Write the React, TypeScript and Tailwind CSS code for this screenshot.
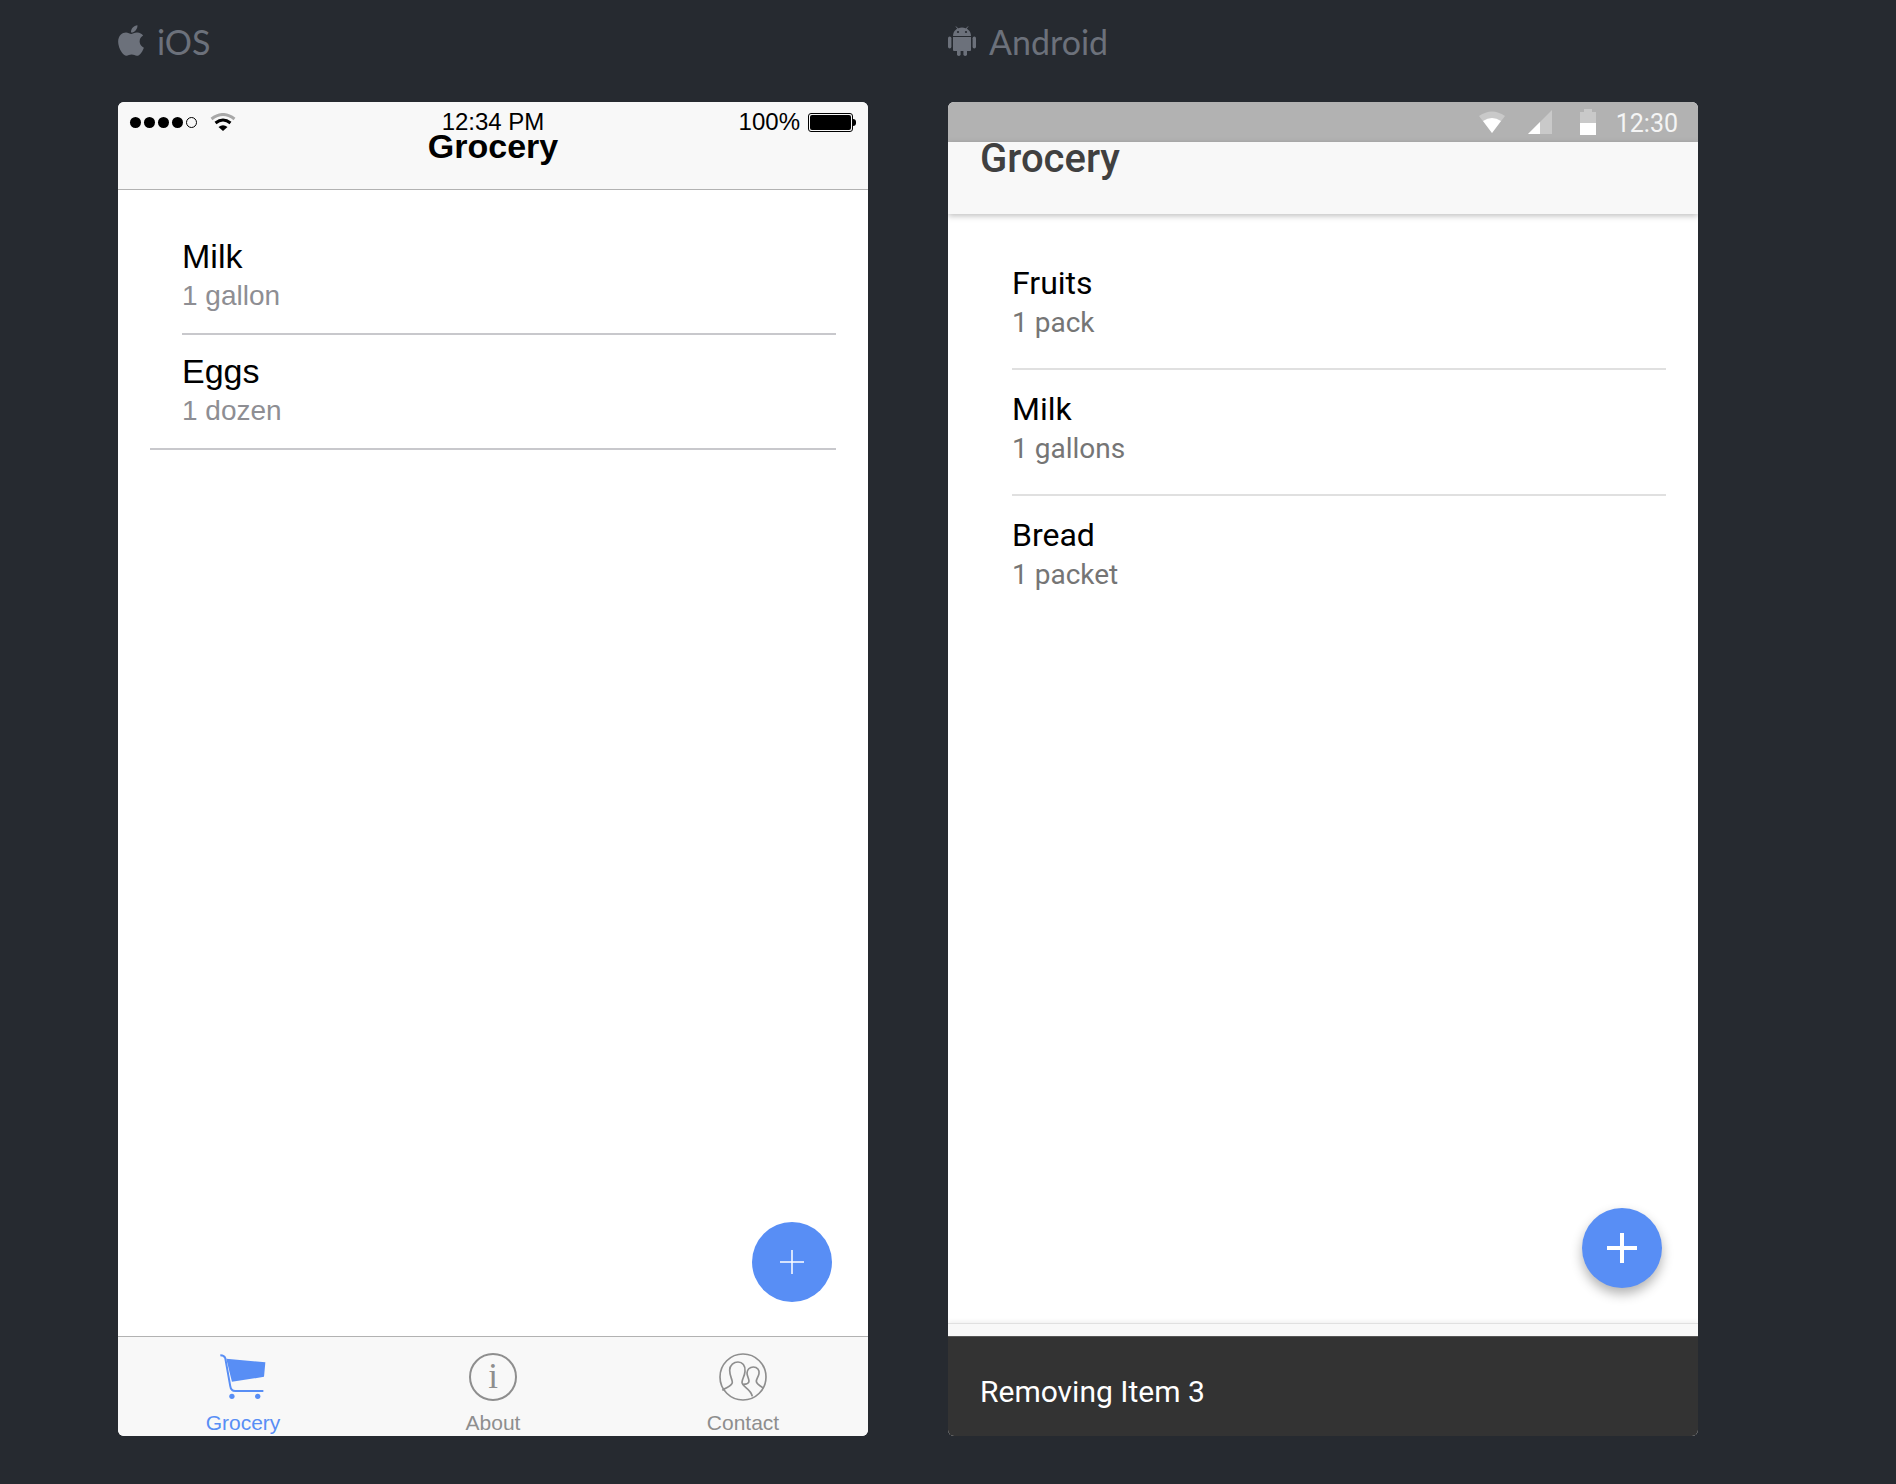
import React from 'react';
import { FaApple } from 'react-icons/fa';

const iosFont = "font-['Liberation_Sans',Arial,sans-serif]";
const roboto = "font-['Roboto',sans-serif]";

function PlatformLabel({ icon, label, gap }: { icon: React.ReactNode; label: string; gap: string }) {
  return (
    <div className={`flex h-[83px] items-center ${gap} mb-[19px] text-[#6c717b] font-['Lato',sans-serif] text-[34px]`}>
      {icon}
      <span>{label}</span>
    </div>
  );
}

function AndroidLogo() {
  return (
    <svg width="28" height="30" viewBox="0 0 28 30" fill="#6c717b" className="-mt-[2px]">
      <path d="M5 10 C5 5 9 1.500 14 1.500 C19 1.500 23 5 23 10 Z" />
      <path d="M8 0.500 L10.500 3.500 M20 0.500 L17.500 3.500" stroke="#6c717b" strokeWidth="1" />
      <circle cx="10" cy="6" r="1.100" fill="#262a30" />
      <circle cx="18" cy="6" r="1.100" fill="#262a30" />
      <path d="M5 11 H23 V24 Q23 25 22 25 H6 Q5 25 5 24 Z" />
      <rect x="0" y="10.500" width="3.400" height="12" rx="1.700" />
      <rect x="24.600" y="10.500" width="3.400" height="12" rx="1.700" />
      <rect x="9" y="23" width="3.600" height="7" rx="1.800" />
      <rect x="15.400" y="23" width="3.600" height="7" rx="1.800" />
    </svg>
  );
}

function IosWifi() {
  return (
    <svg width="26" height="18" viewBox="0 0 26 18" className="ml-[13px]">
      <path d="M1.500 6 Q13 -3 24.500 6" fill="none" stroke="#a8a8a8" strokeWidth="3" />
      <path d="M5.500 10 Q13 4 20.500 10" fill="none" stroke="#000" strokeWidth="3" />
      <path d="M8.500 14 Q13 10.500 17.500 14 L13 18 Z" fill="#000" />
    </svg>
  );
}

function IosStatusBar() {
  return (
    <div className="grid h-10 grid-cols-3 items-center text-[24px] text-black">
      <div className="flex items-center pl-3">
        <div className="flex gap-[3px]">
          {[0, 1, 2, 3].map((i) => (
            <span key={i} className="h-[11px] w-[11px] rounded-full bg-black" />
          ))}
          <span className="h-[11px] w-[11px] rounded-full border border-black" />
        </div>
        <IosWifi />
      </div>
      <div className="text-center leading-none">12:34 PM</div>
      <div className="flex items-center justify-end gap-2 pr-3 leading-none">
        <span>100%</span>
        <div className="flex items-center">
          <div className="h-[19px] w-[45px] rounded-[3px] border border-black p-px">
            <div className="h-full w-full rounded-[2px] bg-black" />
          </div>
          <div className="h-[7px] w-[3px] rounded-r-sm bg-black" />
        </div>
      </div>
    </div>
  );
}

function IosRow({ title, sub, className }: { title: string; sub: string; className: string }) {
  return (
    <div className={`border-b-2 border-[#c8c8cc] ${className}`}>
      <div className="text-[34px] leading-10 text-black">{title}</div>
      <div className="text-[28px] leading-10 text-[#8e8e93]">{sub}</div>
    </div>
  );
}

function CartIcon() {
  return (
    <svg width="53" height="48" viewBox="50 40 160 145">
      <polygon points="78,57 196,68 192,112 95,127" fill="#588ef5" />
      <path d="M60 47 Q72 47 75 56 L90 140 Q92 155 105 155 L190 155" fill="none" stroke="#588ef5" strokeWidth="6" />
      <circle cx="95" cy="171" r="8" fill="#588ef5" />
      <circle cx="173" cy="171" r="8" fill="#588ef5" />
    </svg>
  );
}

function ContactIcon() {
  return (
    <svg width="48" height="48" viewBox="88 40 144 144" fill="none" stroke="#8e8e8e" strokeWidth="5">
      <circle cx="160" cy="112" r="69" />
      <path d="M98 152 C110 142 128 140 128 128 C128 118 120 110 120 92 C120 76 133 67 145 67 C158 67 168 78 166 95 C165 110 157 118 157 128 C157 142 183 146 188 170" />
      <path d="M160 134 C172 134 178 130 178 124 C178 116 172 110 172 100 C172 90 180 82 191 82 C203 82 210 92 208 102 C206 112 200 118 200 125 C200 135 212 137 221 146" />
    </svg>
  );
}

function IosTab({ icon, label, active }: { icon: React.ReactNode; label: string; active?: boolean }) {
  return (
    <div className={`flex flex-col items-center pt-4 ${active ? 'text-[#588ef5]' : 'text-[#8e8e8e]'}`}>
      <div className="flex h-12 items-center justify-center">{icon}</div>
      <div className="mt-[10px] text-[21px] leading-6">{label}</div>
    </div>
  );
}

function IosPhone() {
  return (
    <div className={`relative flex h-[1334px] w-[750px] flex-col overflow-hidden rounded-md bg-white ${iosFont}`}>
      <div className="h-[88px] border-b border-[#b2b2b2] bg-[#f8f8f8]">
        <IosStatusBar />
        <div className="-mt-[8px] text-center text-[34px] font-bold leading-6 text-black">Grocery</div>
      </div>
      <div className="flex-1 pt-[32px]">
        <IosRow title="Milk" sub="1 gallon" className="ml-16 mr-8 h-[113px] pt-[14px]" />
        <IosRow title="Eggs" sub="1 dozen" className="ml-8 mr-8 h-[115px] pl-8 pt-[16px]" />
      </div>
      <div className="grid h-[100px] grid-cols-3 border-t border-[#b2b2b2] bg-[#f8f8f8]">
        <IosTab icon={<CartIcon />} label="Grocery" active />
        <IosTab
          icon={
            <div className="flex h-12 w-12 items-center justify-center rounded-full border-2 border-[#8e8e8e] font-['Liberation_Serif',serif] text-[35px]">
              i
            </div>
          }
          label="About"
        />
        <IosTab icon={<ContactIcon />} label="Contact" />
      </div>
      <button className="absolute right-[36px] top-[1120px] flex h-20 w-20 items-center justify-center rounded-full bg-[#588ef5]">
        <svg width="24" height="24" viewBox="0 0 24 24" stroke="#fff" strokeWidth="1.5">
          <path d="M12 0V24M0 12H24" />
        </svg>
      </button>
    </div>
  );
}

function AndroidStatusBar() {
  return (
    <div className="flex h-10 items-center justify-end bg-[#b2b2b2] pr-5 text-[25px] text-[#f5f5f5]">
      <svg width="26" height="22" viewBox="0 0 26 22">
        <path d="M0 5 Q13 -4 26 5 L13 22 Z" fill="#fff" fillOpacity="0.3" />
        <path d="M4 10 Q13 4 22 10 L13 22 Z" fill="#fff" />
      </svg>
      <svg width="24" height="24" viewBox="0 0 24 24" className="ml-[23px]">
        <polygon points="24,0 24,24 0,24" fill="#fff" fillOpacity="0.3" />
        <polygon points="12,12 12,24 0,24" fill="#fff" />
      </svg>
      <svg width="16" height="26" viewBox="0 0 16 26" className="ml-[28px]">
        <path d="M0 3H4V0H12V3H16V14H0Z" fill="#fff" fillOpacity="0.3" />
        <rect x="0" y="14" width="16" height="12" fill="#fff" />
      </svg>
      <span className="ml-5 pt-[2px] leading-none">12:30</span>
    </div>
  );
}

function AndroidRow({ title, sub, last }: { title: string; sub: string; last?: boolean }) {
  return (
    <div className={`h-[126px] pt-[19px] ${last ? '' : 'border-b-2 border-[#e0e0e0]'}`}>
      <div className="text-[32px] leading-10 text-black">{title}</div>
      <div className="text-[28px] leading-10 text-[#757575]">{sub}</div>
    </div>
  );
}

function AndroidPhone() {
  return (
    <div className={`relative flex h-[1334px] w-[750px] flex-col overflow-hidden rounded-md bg-white ${roboto}`}>
      <AndroidStatusBar />
      <div className="z-10 h-[72px] bg-[#f8f8f8] pl-8 shadow-[0_2px_6px_rgba(0,0,0,0.25)]">
        <div className="text-[40px] font-medium leading-[34px] text-[#404040]">Grocery</div>
      </div>
      <div className="flex-1 pl-16 pr-8 pt-[30px]">
        <AndroidRow title="Fruits" sub="1 pack" />
        <AndroidRow title="Milk" sub="1 gallons" />
        <AndroidRow title="Bread" sub="1 packet" last />
      </div>
      <div className="h-[13px] border-t border-[#e0e0e0] bg-[#f8f8f8] shadow-[0_-2px_4px_rgba(0,0,0,0.06)]" />
      <div className="flex h-[100px] items-center border-t border-[#555] bg-[#333333] pl-8 pt-[10px] text-[30px] text-white">
        Removing Item 3
      </div>
      <button className="absolute right-[36px] top-[1106px] flex h-20 w-20 items-center justify-center rounded-full bg-[#588ef5] shadow-[0_6px_12px_rgba(0,0,0,0.3)]">
        <svg width="30" height="30" viewBox="0 0 30 30" stroke="#fff" strokeWidth="4">
          <path d="M15 0V30M0 15H30" />
        </svg>
      </button>
    </div>
  );
}

export default function App() {
  return (
    <div className="flex h-[1484px] gap-20 overflow-hidden bg-[#262a30] pl-[118px]">
      <div>
        <PlatformLabel icon={<FaApple className="-ml-[2px] -mt-[3px] h-[35px] w-[30px]" />} label="iOS" gap="gap-[11px]" />
        <IosPhone />
      </div>
      <div>
        <PlatformLabel icon={<AndroidLogo />} label="Android" gap="gap-[13px]" />
        <AndroidPhone />
      </div>
    </div>
  );
}
